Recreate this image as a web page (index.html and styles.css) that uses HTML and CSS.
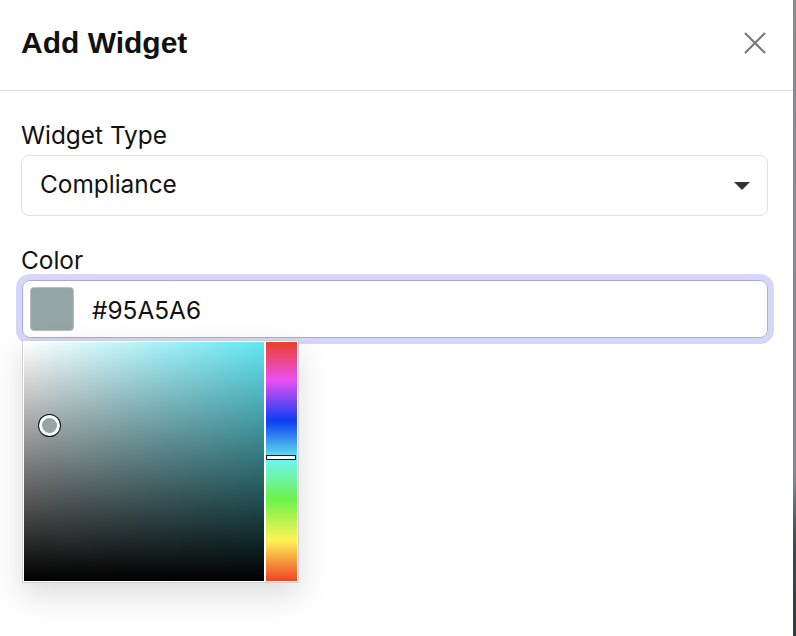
FILE: index.html
```html
<!DOCTYPE html>
<html>
<head>
<meta charset="utf-8">
<link rel="stylesheet" href="styles.css">
</head>
<body>
<div class="modal">
  <div class="modal-header">
    <h1 class="title">Add Widget</h1>
    <button class="close" aria-label="Close">
      <svg width="22" height="22" viewBox="0 0 22 22"><path d="M1 1 L21 21 M21 1 L1 21" stroke="#7a7a7a" stroke-width="2.2" fill="none"/></svg>
    </button>
  </div>
  <div class="modal-body">
    <div class="field">
      <label class="label">Widget Type</label>
      <div class="select">
        <span>Compliance</span>
        <svg class="caret" width="16" height="8" viewBox="0 0 16 8"><path d="M0 0 H16 L8 8 Z" fill="#333"/></svg>
      </div>
    </div>
    <div class="field color-field">
      <label class="label">Color</label>
      <div class="color-input">
        <span class="swatch"></span>
        <span class="hex">#95A5A6</span>
      </div>
      <div class="picker">
        <div class="sat">
          <div class="sat-dark"></div>
          <span class="handle"></span>
        </div>
        <div class="hue">
          <span class="hue-marker"></span>
        </div>
      </div>
    </div>
  </div>
</div>
</body>
</html>
```
FILE: styles.css
```css
* { box-sizing: border-box; }
html, body { margin: 0; height: 100%; }
body {
  background: linear-gradient(to bottom, #8a8a8e 0%, #858890 75%, #3d4a58 85%, #2e3a46 100%);
  font-family: Inter, "Liberation Sans", sans-serif;
  color: #111;
}
.modal {
  width: 793px;
  height: 636px;
  background: #fff;
}
.modal-header {
  height: 91px;
  border-bottom: 1px solid #e2e2e2;
  display: flex;
  align-items: center;
  justify-content: space-between;
  padding: 0 27px 0 21px;
}
.title {
  margin: 0;
  font-family: "Liberation Sans", Arial, sans-serif;
  font-weight: bold;
  font-size: 30px;
  color: #111;
  padding-bottom: 4px;
}
.close {
  border: 0;
  background: none;
  padding: 0;
  width: 22px;
  height: 22px;
  display: flex;
  margin-bottom: 4px;
}
.modal-body {
  padding: 30px 25px 0 21px;
}
.field { display: flex; flex-direction: column; }
.label {
  font-size: 24.4px;
  line-height: 28px;
  margin-bottom: 6px;
}
.select {
  height: 61px;
  border: 1px solid #e0e0e0;
  border-radius: 8px;
  display: flex;
  align-items: center;
  justify-content: space-between;
  padding: 0 17px 3px 18px;
  font-size: 24.4px;
}
.caret { margin-top: 3px; }
.color-field {
  margin-top: 30px;
  position: relative;
}
.color-field .label { margin-bottom: 6px; }
.color-input {
  height: 58px;
  border: 1px solid #a9a8ef;
  border-radius: 8px;
  box-shadow: 0 0 0 6px #d6d6f8;
  display: flex;
  align-items: center;
  padding: 0 0 0 7px;
  font-size: 24.4px;
  margin: 0 0 0 1px;
}
.swatch {
  width: 44px;
  height: 44px;
  background: #95a5a6;
  border: 1px solid #b5c0c1;
  border-radius: 4px;
}
.hex { margin-left: 18px; padding-top: 1px; }
.picker {
  position: absolute;
  left: 1px;
  top: 94px;
  width: 277px;
  height: 243px;
  background: #fff;
  border: 1px solid #d0d0d0;
  padding: 1px;
  display: flex;
  gap: 2px;
  box-shadow: 0 12px 30px rgba(0,0,0,0.14);
}
.sat {
  position: relative;
  width: 240px;
  height: 239px;
  background: linear-gradient(to right, #ffffff, #62e6f3);
}
.sat-dark {
  position: absolute;
  inset: 0;
  background: linear-gradient(to bottom, rgba(0,0,0,0), #000);
}
.handle {
  position: absolute;
  left: 15px;
  top: 73px;
  width: 21px;
  height: 21px;
  border-radius: 50%;
  background: #95a5a6;
  border: 3px solid #fff;
  box-shadow: 0 0 0 1px #111;
}
.hue {
  position: relative;
  flex: 1;
  height: 239px;
  background: linear-gradient(to bottom, #eb3f2a 0%, #ea4ff0 16%, #0a3ef5 33%, #6ff5ea 50%, #6cf24a 66%, #fff356 83%, #ef4425 100%);
}
.hue-marker {
  position: absolute;
  left: 0;
  right: 1px;
  top: 113px;
  height: 5px;
  background: #fff;
  border: 1px solid #111;
}
```
